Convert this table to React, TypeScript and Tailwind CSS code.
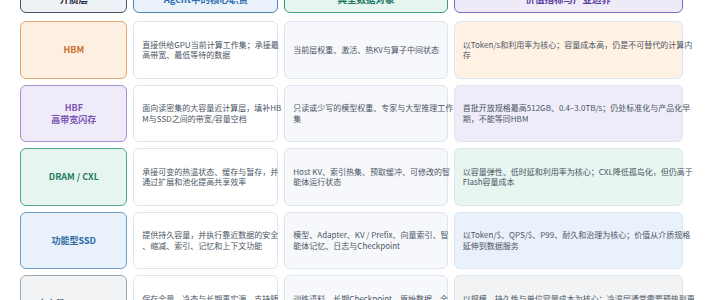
import React from "react";

type Row = {
  label: string[];
  labelCls: string;
  duty: string[];
  obj: string[];
  value: string[];
  valueCls: string;
};

const rows: Row[] = [
  {
    label: ["HBM"],
    labelCls: "bg-[#fdf0e2] border-[#e2a56f] text-[#c9712f]",
    duty: ["直接供给GPU当前计算工作集；承接最", "高带宽、最低等待的数据"],
    obj: ["当前层权重、激活、热KV与算子中间状态"],
    value: ["以Token/s和利用率为核心；容量成本高，仍是不可替代的计算内", "存"],
    valueCls: "bg-[#fff2e5]",
  },
  {
    label: ["HBF", "高带宽闪存"],
    labelCls: "bg-[#efebf8] border-[#a88fd2] text-[#7a57b5]",
    duty: ["面向读密集的大容量近计算层，填补HB", "M与SSD之间的带宽/容量空档"],
    obj: ["只读或少写的模型权重、专家与大型推理工作", "集"],
    value: ["首批开放规格最高512GB、0.4–3.0TB/s；仍处标准化与产品化早", "期，不能等同HBM"],
    valueCls: "bg-[#efecf9]",
  },
  {
    label: ["DRAM / CXL"],
    labelCls: "bg-[#e6f5ef] border-[#52a794] text-[#1f7a66]",
    duty: ["承接可变的热温状态、缓存与暂存，并", "通过扩展和池化提高共享效率"],
    obj: ["Host KV、索引热集、预取缓冲、可修改的智", "能体运行状态"],
    value: ["以容量弹性、低时延和利用率为核心；CXL降低孤岛化，但仍高于", "Flash容量成本"],
    valueCls: "bg-[#e7f6f0]",
  },
  {
    label: ["功能型SSD"],
    labelCls: "bg-[#e9f1fa] border-[#6c9dc8] text-[#2d6ba4]",
    duty: ["提供持久容量，并执行靠近数据的安全", "、缩减、索引、记忆和上下文功能"],
    obj: ["模型、Adapter、KV / Prefix、向量索引、智", "能体记忆、日志与Checkpoint"],
    value: ["以Token/$、QPS/$、P99、耐久和治理为核心；价值从介质规格", "延伸到数据服务"],
    valueCls: "bg-[#e9f1fa]",
  },
  {
    label: ["大容量QLC / HDD"],
    labelCls: "bg-[#f1f3f5] border-[#9ea8b3] text-[#475569]",
    duty: ["保存全量、冷态与长期事实源，支持随", "时回溯与重建"],
    obj: ["训练语料、长期Checkpoint、原始数据、全", "量备份与归档"],
    value: ["以规模、持久性与单位容量成本为核心；冷温层通常需要预热到更", "高层级后使用"],
    valueCls: "bg-[#f1f3f5]",
  },
];

const headers = [
  { t: "介质层", cls: "bg-[#eef1f5] border-[#475569] text-[#1e293b]" },
  { t: "Agent中的核心职责", cls: "bg-[#e9f2fb] border-[#4a86bd] text-[#2b6cb0]" },
  { t: "典型数据对象", cls: "bg-[#e6f5ef] border-[#3d9a85] text-[#1f7a66]" },
  { t: "价值指标与产业边界", cls: "bg-[#efeaf8] border-[#8467c0] text-[#5b3fa0]" },
];

function Lines({ lines }: { lines: string[] }) {
  return (
    <div className="text-[8px] leading-[10.5px] text-[#4b5563]">
      {lines.map((l, i) => (
        <div key={i} className="whitespace-nowrap">
          {l}
        </div>
      ))}
    </div>
  );
}

export default function App() {
  return (
    <div
      className="w-[710px] h-[300px] overflow-hidden bg-white"
      style={{ fontFamily: '"Noto Sans CJK SC", "Noto Sans", sans-serif' }}
    >
      <div className="pl-[20.3px] mt-[-14.7px]">
        <div className="grid grid-cols-[107px_145px_163.5px_229px] gap-x-[6px]">
          {headers.map((h) => (
            <div
              key={h.t}
              className={`h-[28px] rounded-[6px] border-[1.5px] flex items-center justify-center text-[9.5px] font-bold ${h.cls}`}
            >
              {h.t}
            </div>
          ))}
        </div>
        <div className="mt-[8px] grid grid-cols-[107px_145px_163.5px_229px] gap-x-[6px] gap-y-[6px] auto-rows-[57.5px]">
          {rows.map((r, i) => (
            <React.Fragment key={i}>
              <div
                className={`rounded-[6px] border-[1.5px] flex flex-col items-center justify-center text-[9px] leading-[12px] font-bold ${r.labelCls}`}
              >
                {r.label.map((l) => (
                  <div key={l} className="whitespace-nowrap">
                    {l}
                  </div>
                ))}
              </div>
              <div className="rounded-[6px] border border-[#dde5ee] bg-white flex items-center px-[8px]">
                <Lines lines={r.duty} />
              </div>
              <div className="rounded-[6px] border border-[#dde5ee] bg-[#f7f8fc] flex items-center px-[8px]">
                <Lines lines={r.obj} />
              </div>
              <div className={`rounded-[6px] border border-[#dde5ee] flex items-center px-[8px] ${r.valueCls}`}>
                <Lines lines={r.value} />
              </div>
            </React.Fragment>
          ))}
        </div>
      </div>
    </div>
  );
}
